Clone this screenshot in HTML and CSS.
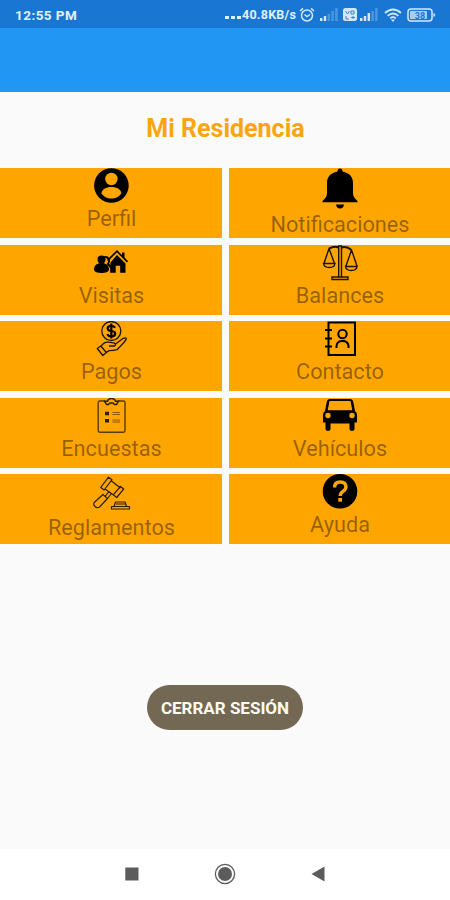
FILE: index.html
```html
<!DOCTYPE html>
<html lang="es">

<head>
  <meta charset="UTF-8">
  <meta name="viewport" content="width=device-width, initial-scale=1.0">
  <title>Mi Residencia</title>
  <link rel="stylesheet" href="styles.css">
</head>

<body>
  <div id="wrap">
    <div class="status">
      <span class="time">12:55 PM</span>
      <div class="status-right">
        <span class="dots"><i></i><i></i><i></i></span>
        <span class="speed">40.8KB/s</span>
        <svg class="alarm" width="16" height="16" viewBox="0 0 16 16" fill="none" stroke="#d3e9fb" stroke-width="1.5">
          <circle cx="8" cy="8.5" r="5.5" />
          <path d="M1 4l3-2.6M15 4l-3-2.6M5.5 7.5L8 9.5l3-2" />
        </svg>
        <svg class="signal" width="18" height="13" viewBox="0 0 18 13">
          <path fill="#d3e9fb" d="M0 10h2.4v3H0zM3.8 8h2.4v5H3.8z" />
          <path fill="#4c98e0" d="M7.6 6H10v7H7.6zM11.4 3h2.4v10h-2.4zM15.2 0h2.4v13h-2.4z" />
        </svg>
        <svg class="volte" width="14" height="13" viewBox="0 0 14 13">
          <rect width="14" height="13" rx="2.5" fill="#d3e9fb" />
          <path d="M2.5 3l2 3 2-3M8 3h3v3H8zM3 8v3h3M8 9.5h4M10 8v3" fill="none" stroke="#3b84ca" stroke-width="1" />
        </svg>
        <svg class="signal2" width="18" height="13" viewBox="0 0 18 13">
          <path fill="#d3e9fb" d="M0 10h2.4v3H0zM3.8 8h2.4v5H3.8zM7.6 5H10v8H7.6z" />
          <path fill="#4c98e0" d="M11.4 3h2.4v10h-2.4zM15.2 0h2.4v13h-2.4z" />
        </svg>
        <svg class="wifi" width="18" height="14" viewBox="0 0 18 14" fill="none" stroke="#d3e9fb" stroke-width="1.7">
          <path d="M1 5Q9-2 17 5M3.6 7.8q5.400-4.600 10.800 0M6.200 10.300q2.800-2.300 5.600 0" />
          <path d="M7 11.500h4L9 14z" fill="#d3e9fb" stroke="none" />
        </svg>
        <svg class="battery" width="29" height="14" viewBox="0 0 29 14">
          <rect x="1" y="1" width="24" height="12" rx="3" fill="none" stroke="#d3e9fb" stroke-width="1.5" />
          <rect x="3" y="3" width="17" height="8" rx="1" fill="#a9d0f3" />
          <path d="M26.5 4.500L28.500 7l-2 2.500z" fill="#d3e9fb" />
          <text x="13" y="10.500" text-anchor="middle" class="level">38</text>
        </svg>
      </div>
    </div>
    <div class="bar"></div>

    <div class="content">
      <h1>Mi Residencia</h1>
      <ul class="menu">
        <li>
          <svg class="icon" viewBox="0 0 36 36">
            <circle cx="18.4" cy="17.5" r="17.3" />
            <circle cx="18.4" cy="11" r="6.2" fill="#ffa500" />
            <path d="M8.500 25.500c0-4 4.500-6.500 9.900-6.500s9.900 2.500 9.900 6.500c-2 3-5.500 5-9.900 5s-7.900-2-9.900-5z" fill="#ffa500" />
          </svg>
          <span>Perfil</span>
        </li>
        <li>
          <svg class="icon icon-bell" viewBox="0 0 36 42">
            <path d="M15.500 3.500Q15.500.5 18 .5t2.500 3C28 5 31 9.500 31 15v10.500q0 3.500 4.500 7.500v1.200H.5V33Q5 29 5 25.500V15C5 9.500 8 5 15.500 3.500zM14 36.500h8q-.5 4-4 4t-4-4z" />
          </svg>
          <span>Notificaciones</span>
        </li>
        <li>
          <svg class="icon" viewBox="0 0 36 36">
            <circle cx="8.500" cy="14.500" r="4" />
            <path d="M1 25c0-5 3-7 7.500-7s7.500 2 7.500 7q-1 3-7.500 3T1 25z" />
            <path d="M10 12.500q4.500-1.500 6 2 .5 3-1 4.500 2 1.500 2.500 3.500" fill="none" stroke="#000" stroke-width="2" />
            <path d="M17.500 17.500L24 10l8.500 8.500v9.300h-5.300v-7h-4.500v7h-5.500v-5z" />
            <path d="M14.500 15.500L24 6.200l10.500 10.600" fill="none" stroke="#000" stroke-width="1.700" />
            <path d="M29 7.500h2.500v6L29 11z" />
          </svg>
          <span>Visitas</span>
        </li>
        <li>
          <svg class="icon" viewBox="0 0 36 36" fill="none" stroke="#1c1200" stroke-width="1.4">
            <path d="M16.700 1h2.800v31h-2.800zM10 32h16v2.500H10z" />
            <path d="M16.500 2.500C13 1 11 1.500 7 3.500M19.500 2.500C23 1.500 26 2 29.500 5" stroke-width="2" />
            <path d="M7 3.500L2 18.500M7 3.500l5.500 15M1.500 18.500h11.500q-.5 4-5.700 4t-5.800-4zM29.500 5l-5.500 16M29.500 5L35 21M23.500 21.500H35q-.5 4-5.700 4t-5.800-4z" />
          </svg>
          <span>Balances</span>
        </li>
        <li>
          <svg class="icon" viewBox="0 0 36 36" fill="none" stroke="#1c1200" stroke-width="1.3" stroke-linejoin="round">
            <circle cx="18.300" cy="10" r="9.500" />
            <path d="M22 6.800q-1-2-3.700-2-3.600 0-3.600 2.500t3.600 2.700q3.900.3 3.900 2.800t-3.900 2.500q-3 0-4-2.200M18.300 2.500v15" stroke="#000" stroke-width="2.2" />
            <path d="M4.300 27.500l3.500-2.500 5.500 6.500-3.500 3zM8 25.200q3.500-5 8-4l5.500 1q2 1.200 0 2.800L16 25M22.500 23l7.500-5.500q3-1.500 3.300.2-.3 2.300-9.300 11-3 1-8 1l-2.700 1.700" />
          </svg>
          <span>Pagos</span>
        </li>
        <li>
          <svg class="icon" viewBox="0 0 36 36" fill="none" stroke="#000" stroke-width="2">
            <path d="M6.500 1.500H33v32.500H6.500zM3 9h7M3 17.500h7M3 25.500h7" />
            <circle cx="20.500" cy="13" r="4.200" />
            <path d="M14.500 27v-2q.5-5 6-5t6 5v2" />
          </svg>
          <span>Contacto</span>
        </li>
        <li>
          <svg class="icon" viewBox="0 0 36 36" fill="none" stroke="#5a3b00" stroke-width="1.4">
            <path d="M12 3H6.800Q5.200 3 5.200 4.600v28q0 1.700 1.600 1.700h23.500q1.700 0 1.700-1.700v-28Q32 3 30.300 3H25" />
            <path d="M11.500 3.200h3q.6-2.700 4-2.700t4 2.700h3l-2 3.300h-2l-1.500-1.500h-3L15.500 6.500h-2z" stroke="#2b1c00" />
            <path d="M12 15.500h4M12 22.700h4" stroke="#2b1c00" stroke-width="3.600" />
            <path d="M19.500 14.500h7.500M19.500 16.500h7.500M19.500 22h7.500M19.500 24h7.500" stroke-width=".7" />
          </svg>
          <span>Encuestas</span>
        </li>
        <li>
          <svg class="icon" viewBox="0 0 36 36">
            <path fill-rule="evenodd" d="M8 1h20q2.700 0 3.300 3l1.700 9q2 1.500 2 4v7.500h-2.500V31q0 2-2.500 2t-2.500-2v-5.500h-19V31q0 2-2.500 2T3.500 31v-6.500H1V17q0-2.500 2-4l1.700-9Q5.300 1 8 1zM7.500 3L5.700 12.300h24.600L28.500 3z" />
            <circle cx="6" cy="17.500" r="2.700" fill="#ffa500" />
            <circle cx="30" cy="17.500" r="2.700" fill="#ffa500" />
          </svg>
          <span>Vehículos</span>
        </li>
        <li>
          <svg class="icon icon-gavel" viewBox="0 0 40 39" fill="none" stroke="#2b1c00" stroke-width="1.2" stroke-linejoin="round">
            <path d="M17.500 3.200l3.500 2.500-7.800 10.300-3.500-2.500zM29.500 12.500l3.200 2.500-7 8.500-3.500-2.700zM20.500 7l9 7M14 15l8.500 6M18 17.500l-4 5M20.500 19.500l-4 5" />
            <path d="M12 20.500l4.500 4-8 8.500q-2.500 1.500-4.500-.5t-.8-4z" />
            <path d="M20.500 35v-2.500h18V35zM23 32.500l1.500-4.500H34l1.500 4.500M25 30h9" />
          </svg>
          <span>Reglamentos</span>
        </li>
        <li>
          <svg class="icon" viewBox="0 0 36 36">
            <circle cx="18" cy="17.300" r="17.300" />
            <path d="M12.500 13.500q0-5.500 5.700-5.500t5.700 5q0 2.300-2.900 4.300-2.800 2-2.800 4.700" fill="none" stroke="#ffa500" stroke-width="3.400" />
            <path d="M16.300 24h3.700v3.700h-3.700z" fill="#ffa500" />
          </svg>
          <span>Ayuda</span>
        </li>
      </ul>
      <button class="logout">CERRAR SESIÓN</button>
    </div>

    <div class="nav">
      <svg width="14" height="14" viewBox="0 0 14 14"><path d="M.3.5h13.200v13H.3z" fill="#5c5c5c" /></svg>
      <svg width="22" height="22" viewBox="0 0 22 22">
        <circle cx="11" cy="11" r="9.600" fill="none" stroke="#5c5c5c" stroke-width="1.300" />
        <circle cx="11" cy="11" r="7" fill="#5c5c5c" />
      </svg>
      <svg width="14" height="16" viewBox="0 0 14 16"><path d="M13.500.5v15L.5 8z" fill="#5c5c5c" /></svg>
    </div>
  </div>
</body>

</html>
```
FILE: styles.css
```css
* {
  margin: 0;
  padding: 0;
  box-sizing: border-box;
}

body {
  font-family: Roboto, "Liberation Sans", sans-serif;
  background: #fafafa;
}

#wrap {
  width: 450px;
  height: 900px;
  display: flex;
  flex-direction: column;
  overflow: hidden;
}

/* barra de estado */
.status {
  height: 28px;
  padding: 1px 14px 0 15px;
  display: flex;
  align-items: center;
  justify-content: space-between;
  background: #1976d2;
  color: #e0f1fd;
  font-size: 13.5px;
  font-weight: 700;
}

.time {
  letter-spacing: .45px;
}

.status-right {
  display: flex;
  align-items: center;
}

.dots {
  display: flex;
  gap: 2px;
  margin: 6px 1px 0 0;
}

.dots i {
  width: 4px;
  height: 3px;
  background: #e0f1fd;
}

.speed {
  width: 55px;
  font-size: 12.5px;
  letter-spacing: .25px;
  white-space: nowrap;
}

.alarm {
  margin-left: 2px;
}

.signal {
  margin-left: 5px;
}

.volte {
  margin-left: 5px;
}

.signal2 {
  margin-left: 3px;
}

.wifi {
  margin-left: 6px;
}

.battery {
  margin-left: 5px;
}

.level {
  font-size: 9px;
  fill: #1976d2;
}

.bar {
  height: 64px;
  background: #2196f3;
}

.content {
  flex: 1;
  display: flex;
  flex-direction: column;
  align-items: center;
}

h1 {
  margin-top: 20px;
  padding-left: 1px;
  height: 56px;
  line-height: 33px;
  font-size: 25px;
  font-weight: 700;
  color: #f9a50f;
}

/* menu */
.menu {
  width: 100%;
  display: grid;
  grid-template-columns: 222px 221px;
  grid-auto-rows: 70px;
  gap: 6.6px 7px;
  list-style: none;
}

.menu li {
  display: flex;
  flex-direction: column;
  align-items: center;
  background: #ffa500;
}

.icon {
  width: 36px;
  height: 36px;
  flex-shrink: 0;
}

.icon-bell {
  height: 42px;
}

.icon-gavel {
  width: 40px;
  height: 39px;
}

.menu span {
  padding-left: 1px;
  line-height: 30px;
  font-size: 21.7px;
  color: rgba(0, 0, 0, .42);
}

.logout {
  width: 156px;
  height: 45px;
  margin-top: 141px;
  border: none;
  border-radius: 23px;
  background: #736854;
  color: #fffaf0;
  font-family: inherit;
  font-size: 17px;
  font-weight: 700;
}

/* botones del sistema */
.nav {
  height: 51px;
  padding: 0 125px 1px;
  display: flex;
  align-items: center;
  justify-content: space-between;
  background: #fff;
}
```
